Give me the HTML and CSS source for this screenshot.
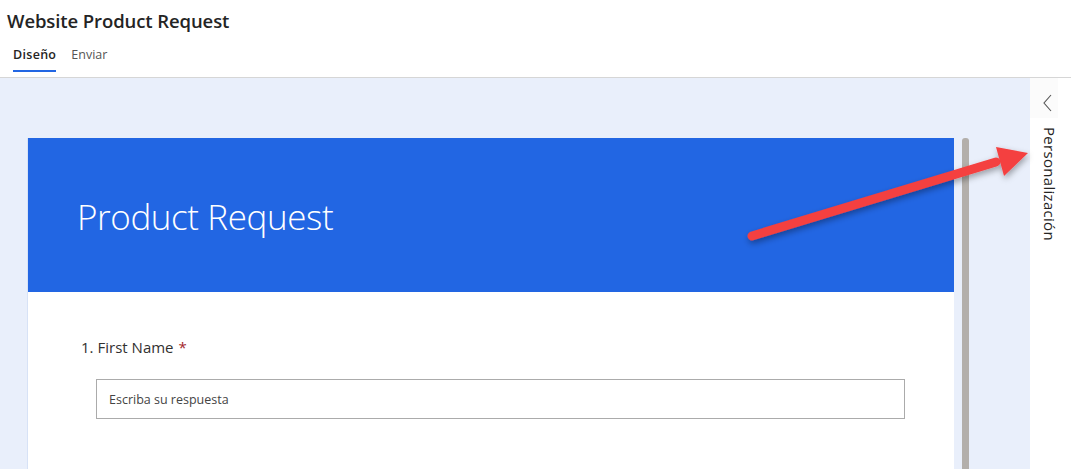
FILE: index.html
```html
<!DOCTYPE html>
<html lang="es">
<head>
<meta charset="utf-8">
<title>Website Product Request</title>
<link rel="stylesheet" href="styles.css">
</head>
<body>
<header class="top">
  <h1 class="page-title">Website Product Request</h1>
  <nav class="tabs">
    <span class="tab active">Diseño</span>
    <span class="tab">Enviar</span>
  </nav>
</header>
<main class="workspace">
  <section class="canvas">
    <div class="card">
      <div class="banner"><h2 class="form-title">Product Request</h2></div>
      <div class="card-body">
        <div class="question">
          <span class="q-num">1.</span><span class="q-text">First Name</span><span class="req">*</span>
        </div>
        <div class="answer">Escriba su respuesta</div>
      </div>
    </div>
    <div class="scrollbar"></div>
  </section>
  <aside class="side">
    <div class="chev">
      <svg width="12" height="18" viewBox="0 0 12 18"><path d="M9 1 L2 9 L9 17" fill="none" stroke="#555" stroke-width="1.1"/></svg>
    </div>
    <div class="side-label">Personalización</div>
  </aside>
  <svg class="arrow" width="1071" height="469" viewBox="0 0 1071 469">
    <defs>
      <filter id="sh" x="-20%" y="-50%" width="140%" height="200%">
        <feDropShadow dx="1" dy="3" stdDeviation="3" flood-color="#000" flood-opacity="0.35"/>
      </filter>
    </defs>
    <g filter="url(#sh)">
      <line x1="752" y1="236" x2="996" y2="162" stroke="#f43f3f" stroke-width="9" stroke-linecap="round"/>
      <polygon points="1028,153 996,147 1004,176" fill="#f43f3f"/>
    </g>
  </svg>
</main>
</body>
</html>
```
FILE: styles.css
```css
* { box-sizing: border-box; }
html, body { margin: 0; padding: 0; }
body {
  width: 1071px;
  height: 469px;
  overflow: hidden;
  font-family: "Open Sans", "Noto Sans", sans-serif;
  color: #201f1e;
  background: #fff;
  position: relative;
}
.top {
  height: 78px;
  border-bottom: 1px solid #d6d6d6;
  padding: 0 0 0 7px;
}
.page-title {
  margin: 0;
  padding-top: 9px;
  font-size: 18.5px;
  font-weight: 600;
  line-height: 24px;
  letter-spacing: -0.1px;
  color: #242424;
}
.tabs {
  display: flex;
  gap: 15px;
  padding-left: 6px;
  margin-top: 13px;
}
.tab {
  font-size: 12.5px;
  line-height: 17px;
  color: #555;
  padding-bottom: 7px;
  border-bottom: 2px solid transparent;
}
.tab.active {
  color: #252423;
  font-weight: 600;
  letter-spacing: 0.3px;
  border-bottom-color: #2266e3;
}
.workspace {
  display: flex;
  height: 391px;
  background: #e9effb;
}
.canvas {
  flex: 1;
  display: flex;
  align-items: flex-start;
  gap: 8px;
  padding: 60px 0 0 27px;
}
.card {
  width: 927px;
  height: 340px;
  background: #fff;
  border-left: 1px solid #d7e2f6;
}
.banner {
  height: 154px;
  background: #2266e3;
  display: flex;
  align-items: center;
  padding-left: 49px;
}
.form-title {
  margin: 0;
  color: #fff;
  font-weight: 300;
  font-size: 35px;
  letter-spacing: -0.4px;
  padding-top: 3px;
}
.card-body {
  padding: 45px 0 0 53px;
}
.question {
  font-size: 15px;
  line-height: 20px;
  color: #323130;
}
.q-num { margin-right: 4px; }
.req { color: #a4262c; margin-left: 5px; }
.answer {
  margin: 22px 0 0 15px;
  width: 809px;
  height: 40px;
  border: 1px solid #ababab;
  font-size: 12.5px;
  color: #444;
  padding: 11px 0 0 12px;
}
.scrollbar {
  width: 7px;
  height: 340px;
  background: #b3afab;
  border-radius: 3px 3px 0 0;
}
.side {
  width: 41px;
  background: #fff;
  display: flex;
  flex-direction: column;
  align-items: flex-start;
}
.chev {
  width: 28px;
  height: 40px;
  background: #fbfbfb;
  display: flex;
  align-items: center;
  justify-content: center;
  padding: 10px 0 0 8px;
}
.side-label {
  writing-mode: vertical-rl;
  font-size: 15px;
  color: #252423;
  margin: 9px 0 0 10px;
  letter-spacing: 0.3px;
}
.arrow {
  position: absolute;
  left: 0;
  top: 0;
  pointer-events: none;
}
```
